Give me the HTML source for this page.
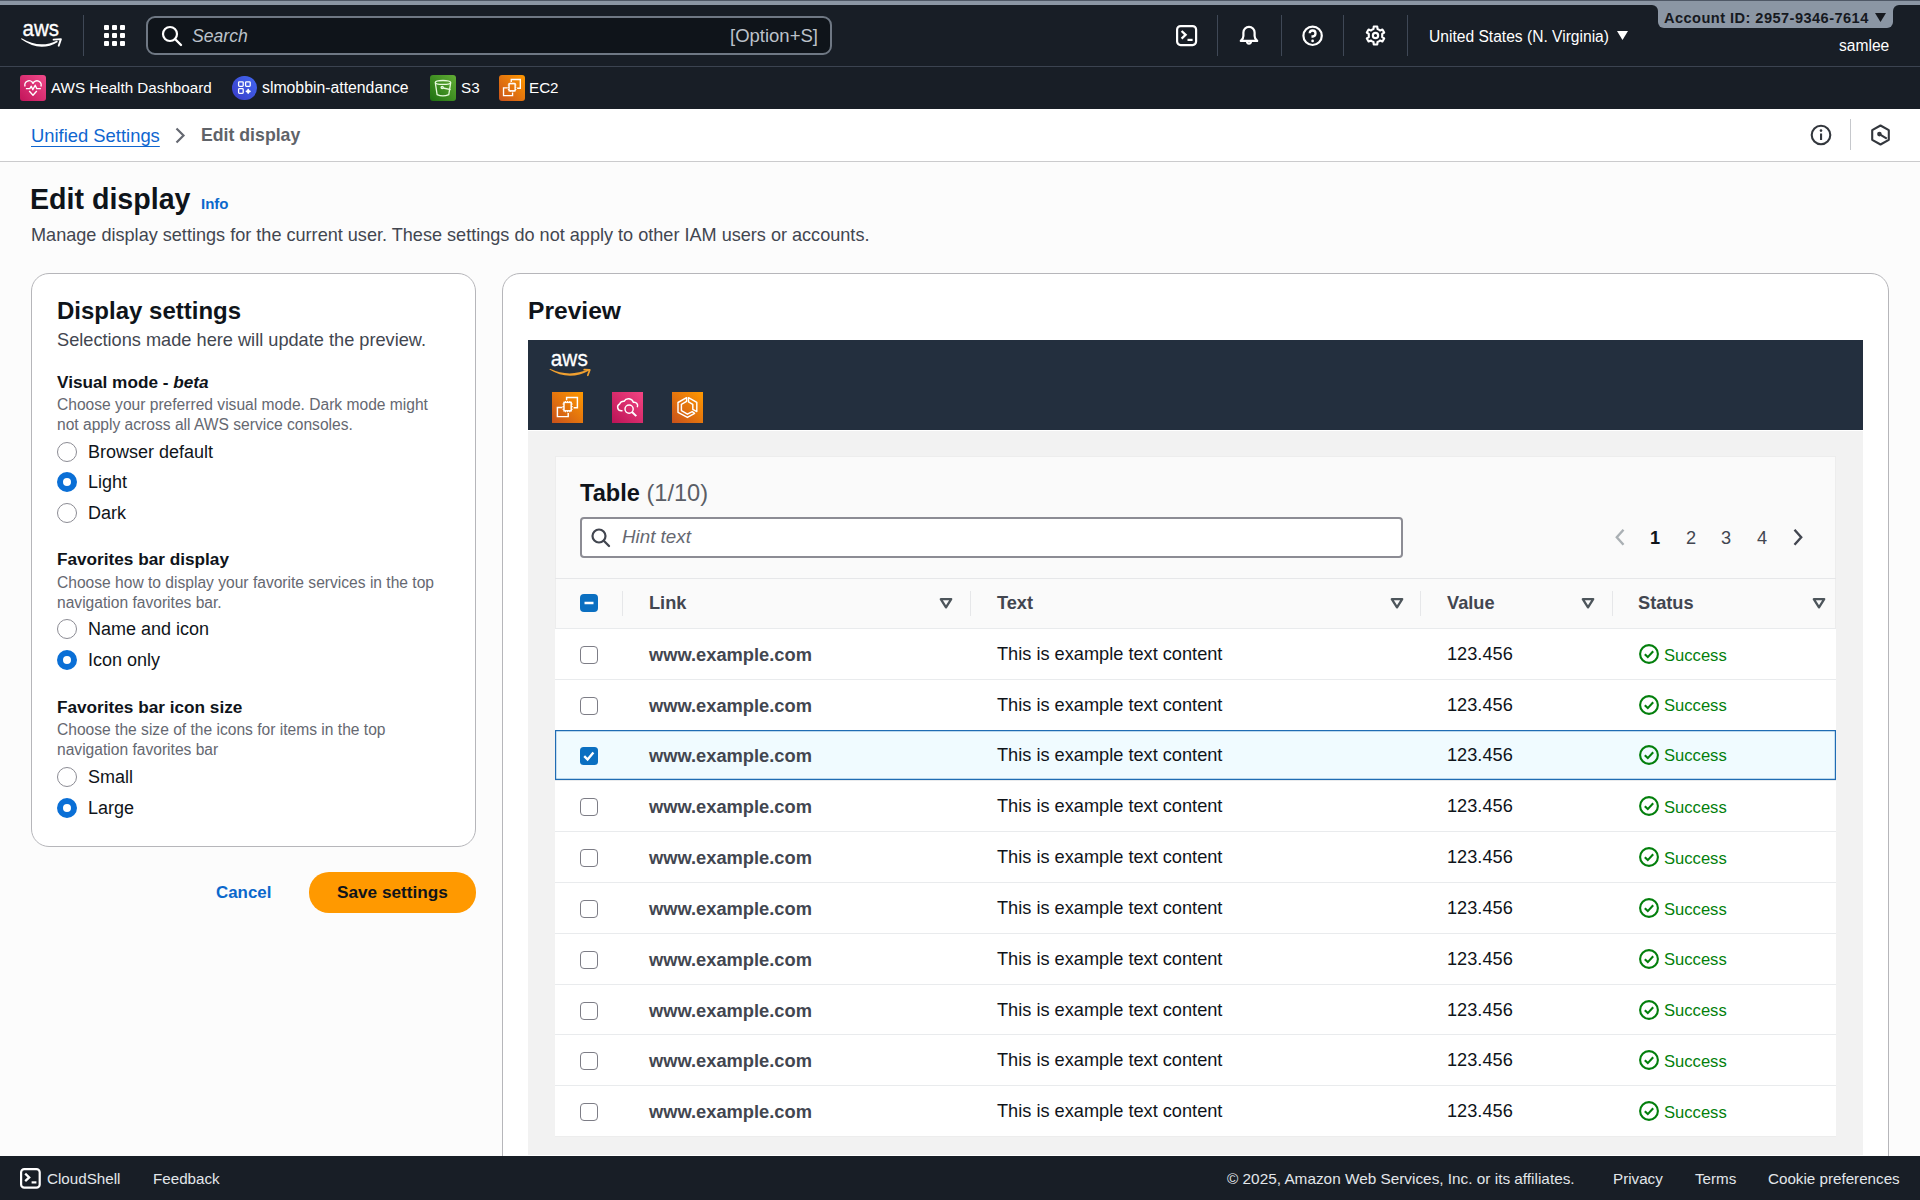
<!DOCTYPE html>
<html><head><meta charset="utf-8">
<style>
*{box-sizing:border-box;margin:0;padding:0}
html,body{width:1920px;height:1200px;overflow:hidden;background:#fcfcfc;font-family:"Liberation Sans",sans-serif;color:#0f141a}
.a{position:absolute;white-space:nowrap}
#top{position:absolute;left:0;top:0;width:1920px;height:109px;background:#181e26}
#strip{position:absolute;left:0;top:0;width:1920px;height:5px;background:#8b96a4;border-top:1px solid #4f5866}
#sep1{position:absolute;left:0;top:66px;width:1920px;height:1px;background:#3b4350}
.vd{position:absolute;width:1px;background:#4b5563}
#crumb{position:absolute;left:0;top:109px;width:1920px;height:53px;background:#fff;border-bottom:1px solid #cbcbcd}
.panel{position:absolute;background:#fff;border:1px solid #b6b6ba;border-radius:18px}
.h2{font-weight:700;font-size:24px;color:#0f141a}
.lbl{font-weight:700;font-size:17.2px;color:#0f141a}
.desc{font-size:15.6px;color:#656871}
.radio{position:absolute;width:20px;height:20px;border-radius:50%;border:1.4px solid #8c8c94;background:#fff}
.radio.on{border:6px solid #0a6fd6}
.rl{font-size:18px;color:#0f141a}
#foot{position:absolute;left:0;top:1155.5px;width:1920px;height:45px;background:#181e26}
.ft{color:#e2e6ea;font-size:15.2px}
.cb{position:absolute;width:18px;height:18px;border:1.5px solid #7d7d86;border-radius:4px;background:#fff}
.row{position:absolute;left:555px;width:1281px;height:51px;background:#fff;border-top:1px solid #e9ebed}
.lnk{position:absolute;left:94px;top:15px;font-weight:700;font-size:18.3px;color:#424650}
.txt{position:absolute;left:442px;top:15px;font-size:18.2px;color:#0f141a}
.val{position:absolute;left:892px;top:15px;font-size:18.2px;color:#0f141a}
.st{position:absolute;left:1083px;top:16.5px;font-size:16.6px;color:#037f0c}
</style></head><body>
<div id="top"></div>
<div id="strip"></div>
<div id="sep1"></div>

<!-- header -->
<svg class="a" style="left:0;top:0" width="80" height="60" viewBox="0 0 80 60">
 <text x="22.6" y="36" font-family="Liberation Sans" font-size="22.3" fill="#fff" stroke="#fff" stroke-width="0.35" textLength="36.5" lengthAdjust="spacingAndGlyphs">aws</text>
 <path d="M21 39.1 Q40 53 57.8 41.9 L57.1 40.4 Q40 49.2 21.6 38.3 Z" fill="#fff"/>
 <path d="M53.6 39.6 L60.9 39.1 L58.7 45.7" stroke="#fff" stroke-width="1.9" fill="none" stroke-linecap="round" stroke-linejoin="round"/>
</svg>
<div class="vd" style="left:83px;top:15px;height:41px;background:#3f4856"></div>
<svg class="a" style="left:104px;top:25px" width="22" height="22" viewBox="0 0 22 22" fill="#fff">
 <rect x="0" y="0" width="5" height="5" rx="1"/><rect x="8" y="0" width="5" height="5" rx="1"/><rect x="16" y="0" width="5" height="5" rx="1"/>
 <rect x="0" y="8" width="5" height="5" rx="1"/><rect x="8" y="8" width="5" height="5" rx="1"/><rect x="16" y="8" width="5" height="5" rx="1"/>
 <rect x="0" y="16" width="5" height="5" rx="1"/><rect x="8" y="16" width="5" height="5" rx="1"/><rect x="16" y="16" width="5" height="5" rx="1"/>
</svg>
<div class="a" style="left:146px;top:16px;width:686px;height:39px;border:2px solid #6f7884;border-radius:9px;background:#0f141a"></div>
<svg class="a" style="left:161px;top:25px" width="22" height="22" viewBox="0 0 22 22"><circle cx="9" cy="9" r="7" stroke="#fff" stroke-width="2.2" fill="none"/><path d="M14 14 L20 20" stroke="#fff" stroke-width="2.4" stroke-linecap="round"/></svg>
<div class="a" style="left:192px;top:26px;font-size:17.6px;font-style:italic;color:#bcc2ca">Search</div>
<div class="a" style="left:730px;top:25px;font-size:18.5px;color:#bcc2ca">[Option+S]</div>

<svg class="a" style="left:1175px;top:24px" width="23" height="23" viewBox="0 0 23 23"><rect x="2.1" y="2.1" width="19" height="19" rx="3.5" stroke="#fff" stroke-width="2.2" fill="none"/><path d="M6.6 7 L10.6 10.8 L6.6 14.6" stroke="#fff" stroke-width="2.3" fill="none"/><path d="M12.5 15.9 H17.6" stroke="#fff" stroke-width="2.2"/></svg>
<div class="vd" style="left:1217px;top:15px;height:41px;background:#3f4856"></div>
<svg class="a" style="left:1238px;top:24px" width="22" height="23" viewBox="0 0 22 23"><path d="M2.8 16.9 Q5.4 14.6 5.4 12 V8.4 A5.6 5.6 0 0 1 16.6 8.4 V12 Q16.6 14.6 19.2 16.9 Z" stroke="#fff" stroke-width="2.2" fill="none" stroke-linejoin="round"/><path d="M9 17.6 A2 2 0 0 0 13 17.6" stroke="#fff" stroke-width="2.2" fill="none"/></svg>
<div class="vd" style="left:1281px;top:15px;height:41px;background:#3f4856"></div>
<svg class="a" style="left:1301px;top:24px" width="23" height="23" viewBox="0 0 23 23"><circle cx="11.6" cy="11.8" r="9.2" stroke="#fff" stroke-width="2.2" fill="none"/><path d="M8.7 9.3 A2.9 2.9 0 1 1 11.6 12.3 V13.8" stroke="#fff" stroke-width="2.3" fill="none"/><circle cx="11.6" cy="16.9" r="1.35" fill="#fff"/></svg>
<div class="vd" style="left:1343px;top:15px;height:41px;background:#3f4856"></div>
<svg class="a" style="left:1365px;top:25px" width="21" height="21" viewBox="0 0 20.6 20.6"><path d="M7.00 4.58 L8.33 3.86 L8.58 1.47 L12.02 1.47 L12.27 3.86 L13.60 4.58 L14.89 5.38 L17.09 4.40 L18.81 7.37 L16.86 8.79 L16.90 10.30 L16.86 11.81 L18.81 13.23 L17.09 16.20 L14.89 15.22 L13.60 16.02 L12.27 16.74 L12.02 19.13 L8.58 19.13 L8.33 16.74 L7.00 16.02 L5.71 15.22 L3.51 16.20 L1.79 13.23 L3.74 11.81 L3.70 10.30 L3.74 8.79 L1.79 7.37 L3.51 4.40 L5.71 5.38 Z" stroke="#fff" stroke-width="2.1" fill="none" stroke-linejoin="round"/><circle cx="10.3" cy="10.3" r="2.6" stroke="#fff" stroke-width="2.1" fill="none"/></svg>
<div class="vd" style="left:1407px;top:15px;height:41px;background:#3f4856"></div>
<div class="a" style="left:1429px;top:28px;font-size:15.6px;color:#fff">United States (N. Virginia)</div>
<svg class="a" style="left:1617px;top:31px" width="11" height="9" viewBox="0 0 11 9"><path d="M0 0 H11 L5.5 9 Z" fill="#fff"/></svg>
<div class="a" style="left:1640px;top:4px;width:270px;height:12px;background:#8b96a4"></div><div class="a" style="left:1630px;top:5px;width:28px;height:12px;background:#181e26;border-top-right-radius:6px"></div><div class="a" style="left:1893px;top:5px;width:27px;height:12px;background:#181e26;border-top-left-radius:6px"></div><div class="a" style="left:1658px;top:4px;width:235px;height:24px;background:#8b96a4;border-radius:0 0 6px 6px"></div>
<div class="a" style="left:1664px;top:10px;font-size:14.6px;letter-spacing:0.45px;font-weight:700;color:#16191f">Account ID: 2957-9346-7614</div>
<svg class="a" style="left:1875px;top:13px" width="11" height="9" viewBox="0 0 11 9"><path d="M0 0 H11 L5.5 9 Z" fill="#16191f"/></svg>
<div class="a" style="left:1839px;top:37px;font-size:15.6px;color:#fff">samlee</div>

<!-- favorites -->
<div class="a" style="left:20px;top:75px;width:26px;height:26px;border-radius:3px;background:linear-gradient(45deg,#c2145a,#f04a8a)"></div>
<svg class="a" style="left:20px;top:75px" width="26" height="26" viewBox="0 0 26 26" stroke="#fff" stroke-width="1.35" fill="none" stroke-linejoin="round"><path d="M5.1 11.6 A4.1 4.1 0 0 1 13 8.4 A4.1 4.1 0 0 1 20.9 11.6"/><path d="M5.9 13.6 H9.8 L11.3 11.2 L12.8 14.8 L15.2 10.2 L16.8 13.6 H20.9"/><path d="M9.2 16 L13 20.3 L16.8 16"/></svg>
<div class="a" style="left:51px;top:79px;font-size:15.2px;color:#fff">AWS Health Dashboard</div>
<div class="a" style="left:232px;top:75.5px;width:24.5px;height:24.5px;border-radius:50%;background:linear-gradient(45deg,#3a3cc8,#4168f0)"></div><svg class="a" style="left:232px;top:75px" width="25" height="25" viewBox="0 0 25 25" stroke="#fff" stroke-width="1.3" fill="none"><rect x="6.6" y="6.8" width="4.6" height="4.6" rx="0.8"/><rect x="13.6" y="6.8" width="4.6" height="4.6" rx="0.8"/><rect x="6.6" y="13.7" width="4.6" height="4.6" rx="0.8"/><path d="M16.2 13.8 Q16.2 16.3 18.7 16.3 Q16.2 16.3 16.2 18.8 Q16.2 16.3 13.7 16.3 Q16.2 16.3 16.2 13.8 Z" stroke-width="1.2" fill="#fff"/></svg>
<div class="a" style="left:262px;top:79px;font-size:15.8px;color:#fff">slmobbin-attendance</div>
<div class="a" style="left:430px;top:75px;width:26px;height:26px;border-radius:3px;background:linear-gradient(45deg,#1d7010,#62ad35)"></div>
<svg class="a" style="left:430px;top:75px" width="26" height="26" viewBox="0 0 26 26" stroke="#e6fadc" stroke-width="1.3" fill="none"><ellipse cx="13" cy="7.4" rx="7.7" ry="1.9"/><path d="M5.3 7.6 L7.1 19.6 Q12.9 22.2 18.8 19.6 L20.7 7.6"/><circle cx="12.2" cy="12.4" r="1.1"/><path d="M13.2 13 L20.6 14.6"/></svg>
<div class="a" style="left:461px;top:79px;font-size:15.2px;color:#fff">S3</div>
<div class="a" style="left:499px;top:75px;width:26px;height:26px;border-radius:3px;background:linear-gradient(45deg,#c8511b,#ff9900)"></div>
<svg class="a" style="left:499px;top:75px" width="26" height="26" viewBox="0 0 31 31" stroke="#fff" stroke-width="1.6" fill="none">
 <rect x="12" y="10.4" width="7.2" height="8.4"/>
 <path d="M13.4 10.4 V8.9 M15.6 10.4 V8.9 M17.8 10.4 V8.9 M13.4 18.8 V20.3 M15.6 18.8 V20.3 M17.8 18.8 V20.3 M12 12 H10.5 M12 14.6 H10.5 M12 17.2 H10.5 M19.2 12 H20.7 M19.2 14.6 H20.7 M19.2 17.2 H20.7" stroke-width="1.2"/>
 <path d="M14.6 8.2 V5.4 H25.4 V15.8 H21.6"/>
 <path d="M10.4 15.4 H5.4 V24.6 H16.2 V21"/>
</svg>
<div class="a" style="left:529px;top:79px;font-size:15.2px;color:#fff">EC2</div>

<div id="crumb"></div>

<!-- breadcrumb -->
<div class="a" style="left:31px;top:125px;font-size:18.4px;color:#0f66d0;text-decoration:underline;text-underline-offset:4px;text-decoration-thickness:1px">Unified Settings</div>
<svg class="a" style="left:174px;top:127px" width="12" height="17" viewBox="0 0 12 17"><path d="M2.5 1.5 L9.5 8.5 L2.5 15.5" stroke="#656871" stroke-width="2.2" fill="none"/></svg>
<div class="a" style="left:201px;top:125px;font-size:17.7px;font-weight:700;color:#5f6369">Edit display</div>
<svg class="a" style="left:1810px;top:124px" width="22" height="22" viewBox="0 0 22 22"><circle cx="11" cy="11" r="9.3" stroke="#33373d" stroke-width="2.1" fill="none"/><rect x="10" y="9.5" width="2.1" height="6.5" fill="#33373d"/><circle cx="11" cy="6.6" r="1.3" fill="#33373d"/></svg>
<div class="vd" style="left:1850px;top:119px;height:31px;background:#c6c8cc"></div>
<svg class="a" style="left:1870px;top:124px" width="21" height="22" viewBox="0 0 21 22"><path d="M10.5 1.5 L18.8 6.2 V15.8 L10.5 20.5 L2.2 15.8 V6.2 Z" stroke="#33373d" stroke-width="2.1" fill="none" stroke-linejoin="round"/><circle cx="9.4" cy="10.1" r="2.3" fill="#33373d"/><path d="M9.4 10.1 L16.8 14.6" stroke="#33373d" stroke-width="2.1"/></svg>

<!-- title -->
<div class="a" style="left:30px;top:183px;font-size:28.6px;font-weight:700;color:#0f141a">Edit display</div>
<div class="a" style="left:201px;top:195px;font-size:15px;font-weight:700;color:#0b68cc">Info</div>
<div class="a" style="left:31px;top:225px;font-size:18.1px;color:#424650">Manage display settings for the current user. These settings do not apply to other IAM users or accounts.</div>

<!-- left panel -->
<div class="panel" style="left:31px;top:273px;width:445px;height:574px"></div>
<div class="a h2" style="left:57px;top:297px">Display settings</div>
<div class="a" style="left:57px;top:330px;font-size:18.2px;color:#424650">Selections made here will update the preview.</div>

<div class="a lbl" style="left:57px;top:372px">Visual mode - <i>beta</i></div>
<div class="a desc" style="left:57px;top:396px">Choose your preferred visual mode. Dark mode might</div>
<div class="a desc" style="left:57px;top:416px">not apply across all AWS service consoles.</div>
<div class="radio" style="left:57px;top:442px"></div><div class="a rl" style="left:88px;top:442px">Browser default</div>
<div class="radio on" style="left:57px;top:472px"></div><div class="a rl" style="left:88px;top:472px">Light</div>
<div class="radio" style="left:57px;top:503px"></div><div class="a rl" style="left:88px;top:503px">Dark</div>

<div class="a lbl" style="left:57px;top:549px">Favorites bar display</div>
<div class="a desc" style="left:57px;top:574px">Choose how to display your favorite services in the top</div>
<div class="a desc" style="left:57px;top:594px">navigation favorites bar.</div>
<div class="radio" style="left:57px;top:619px"></div><div class="a rl" style="left:88px;top:619px">Name and icon</div>
<div class="radio on" style="left:57px;top:650px"></div><div class="a rl" style="left:88px;top:650px">Icon only</div>

<div class="a lbl" style="left:57px;top:697px">Favorites bar icon size</div>
<div class="a desc" style="left:57px;top:721px">Choose the size of the icons for items in the top</div>
<div class="a desc" style="left:57px;top:741px">navigation favorites bar</div>
<div class="radio" style="left:57px;top:767px"></div><div class="a rl" style="left:88px;top:767px">Small</div>
<div class="radio on" style="left:57px;top:798px"></div><div class="a rl" style="left:88px;top:798px">Large</div>

<div class="a" style="left:216px;top:883px;font-size:16.9px;font-weight:700;color:#0b68cc">Cancel</div>
<div class="a" style="left:309px;top:872px;width:167px;height:41px;border-radius:20px;background:#ff9900"></div>
<div class="a" style="left:337px;top:882px;font-size:17.2px;font-weight:700;color:#0f141a">Save settings</div>


<!-- right panel -->
<div class="panel" style="left:502px;top:273px;width:1387px;height:960px"></div>
<div class="a h2" style="left:528px;top:297px;font-size:24.6px">Preview</div>
<div class="a" style="left:528px;top:340px;width:1335px;height:90px;background:#232f3e"></div>
<svg class="a" style="left:530px;top:340px" width="80" height="45" viewBox="0 0 80 45">
 <text x="20.8" y="26.1" font-family="Liberation Sans" font-size="21.8" fill="#fff" stroke="#fff" stroke-width="0.3" textLength="37" lengthAdjust="spacingAndGlyphs">aws</text>
 <path d="M19.4 29.6 Q39 41.5 59.3 30.6 L58.6 29.3 Q39 37.8 20 28.8 Z" fill="#f0a030"/>
 <path d="M54.2 29.7 L59.8 29.9 L57.8 35.3" stroke="#f0a030" stroke-width="1.7" fill="none" stroke-linecap="round" stroke-linejoin="round"/>
</svg>
<div class="a" style="left:552px;top:392px;width:31px;height:30.5px;background:linear-gradient(45deg,#c8511b,#ff9900)"></div>
<svg class="a" style="left:552px;top:392px" width="31" height="31" viewBox="0 0 31 31" stroke="#fff" stroke-width="1.45" fill="none">
 <rect x="12" y="10.4" width="7.2" height="8.4"/>
 <path d="M13.4 10.4 V8.9 M15.6 10.4 V8.9 M17.8 10.4 V8.9 M13.4 18.8 V20.3 M15.6 18.8 V20.3 M17.8 18.8 V20.3 M12 12 H10.5 M12 14.6 H10.5 M12 17.2 H10.5 M19.2 12 H20.7 M19.2 14.6 H20.7 M19.2 17.2 H20.7" stroke-width="1.1"/>
 <path d="M14.6 8.2 V5.4 H25.4 V15.8 H21.6"/>
 <path d="M10.4 15.4 H5.4 V24.6 H16.2 V21"/>
</svg>
<div class="a" style="left:612px;top:392px;width:31px;height:30.5px;background:linear-gradient(45deg,#bc1356,#f34482)"></div>
<svg class="a" style="left:612px;top:392px" width="31" height="31" viewBox="0 0 31 31" stroke="#fff" stroke-width="1.45" fill="none">
 <path d="M10.5 18.8 H9.2 A3.6 3.6 0 0 1 7.6 12 A4.6 4.6 0 0 1 12 9.3 A5.2 5.2 0 0 1 21.4 10.4 A3.4 3.4 0 0 1 25.3 15.2"/>
 <circle cx="17.1" cy="17.1" r="4.1"/>
 <path d="M20 20 L24.3 24.1" stroke-width="2"/>
</svg>
<div class="a" style="left:672px;top:392px;width:31px;height:30.5px;background:linear-gradient(45deg,#c8511b,#ff9900)"></div>
<svg class="a" style="left:672px;top:392px" width="31" height="31" viewBox="0 0 31 31" stroke="#fff" stroke-width="1.45" fill="none" stroke-linejoin="round">
 <path d="M14.6 5.6 L6 10.5 V20.3 L15.4 25.4 L22.6 21.3 L20.2 19.6 L15.4 22.2 L9.4 18.6 V12.3 L14.6 9.3 Z"/>
 <path d="M16.5 5.6 L24.8 10.4 V19.6 L20.8 17.4 V12.4 L16.5 9.9 Z"/>
</svg>
<div class="a" style="left:528px;top:431px;width:1335px;height:724px;background:#f2f2f2"></div>
<div class="a" style="left:555px;top:456px;width:1281px;height:681px;background:#fafafa;border:1px solid #ededed;border-radius:0"></div>
<div class="a" style="left:580px;top:480px;font-size:23.6px;font-weight:700;color:#0f141a">Table <span style="font-weight:400;color:#5a5e66">(1/10)</span></div>
<div class="a" style="left:580px;top:517px;width:823px;height:41px;border:2px solid #8c8c94;border-radius:4px;background:#fff"></div>
<svg class="a" style="left:590px;top:527px" width="22" height="22" viewBox="0 0 22 22"><circle cx="9" cy="9" r="6.5" stroke="#424650" stroke-width="2.2" fill="none"/><path d="M13.8 13.8 L19 19" stroke="#424650" stroke-width="2.3" stroke-linecap="round"/></svg>
<div class="a" style="left:622px;top:526px;font-size:18.8px;font-style:italic;color:#656871">Hint text</div>
<svg class="a" style="left:1613px;top:527px" width="14" height="20" viewBox="0 0 14 20"><path d="M10.5 2.8 L3.8 10.3 L10.5 17.8" stroke="#aab0b4" stroke-width="2.4" fill="none"/></svg>
<div class="a" style="left:1650px;top:528px;font-size:18.2px;font-weight:700;color:#0f141a">1</div>
<div class="a" style="left:1686px;top:528px;font-size:18.2px;color:#424650">2</div>
<div class="a" style="left:1721px;top:528px;font-size:18.2px;color:#424650">3</div>
<div class="a" style="left:1757px;top:528px;font-size:18.2px;color:#424650">4</div>
<svg class="a" style="left:1791px;top:527px" width="14" height="20" viewBox="0 0 14 20"><path d="M3.5 2.8 L10.2 10.3 L3.5 17.8" stroke="#424650" stroke-width="2.4" fill="none"/></svg>
<div class="a" style="left:555px;top:578px;width:1281px;height:1px;background:#e6e7e9"></div>
<svg class="a" style="left:580px;top:594px" width="18" height="18" viewBox="0 0 18 18"><rect width="18" height="18" rx="4" fill="#0a6fc1"/><path d="M4.5 9 H13.5" stroke="#fff" stroke-width="2.5"/></svg>
<div class="vd" style="left:622px;top:591px;height:25px;background:#e6e7e9"></div>
<div class="vd" style="left:970px;top:591px;height:25px;background:#e6e7e9"></div>
<div class="vd" style="left:1420px;top:591px;height:25px;background:#e6e7e9"></div>
<div class="vd" style="left:1612px;top:591px;height:25px;background:#e6e7e9"></div>
<div class="a" style="left:649px;top:593px;font-size:18.2px;font-weight:700;color:#424650">Link</div>
<div class="a" style="left:997px;top:593px;font-size:18.2px;font-weight:700;color:#424650">Text</div>
<div class="a" style="left:1447px;top:593px;font-size:18.2px;font-weight:700;color:#424650">Value</div>
<div class="a" style="left:1638px;top:593px;font-size:18.2px;font-weight:700;color:#424650">Status</div>
<svg class="a" style="left:939px;top:597px" width="14" height="13" viewBox="0 0 14 13"><path d="M1.8 2.1 H12.2 L7 10.4 Z" stroke="#4d555b" stroke-width="2.3" fill="none" stroke-linejoin="round"/></svg>
<svg class="a" style="left:1390px;top:597px" width="14" height="13" viewBox="0 0 14 13"><path d="M1.8 2.1 H12.2 L7 10.4 Z" stroke="#4d555b" stroke-width="2.3" fill="none" stroke-linejoin="round"/></svg>
<svg class="a" style="left:1581px;top:597px" width="14" height="13" viewBox="0 0 14 13"><path d="M1.8 2.1 H12.2 L7 10.4 Z" stroke="#4d555b" stroke-width="2.3" fill="none" stroke-linejoin="round"/></svg>
<svg class="a" style="left:1812px;top:597px" width="14" height="13" viewBox="0 0 14 13"><path d="M1.8 2.1 H12.2 L7 10.4 Z" stroke="#4d555b" stroke-width="2.3" fill="none" stroke-linejoin="round"/></svg>
<div class="row" style="top:628.0px;height:50.8px"><div class="cb" style="left:25px;top:17px"></div><div class="lnk">www.example.com</div><div class="txt">This is example text content</div><div class="val">123.456</div><svg class="a" style="left:1083.5px;top:15px" width="20" height="20" viewBox="0 0 20 20"><circle cx="10" cy="10" r="8.9" stroke="#037f0c" stroke-width="2.1" fill="none"/><path d="M5.8 10.2 L8.8 13.1 L14.2 7.2" stroke="#037f0c" stroke-width="2.1" fill="none"/></svg><div class="st" style="left:1109px">Success</div></div>
<div class="row" style="top:678.8px;height:50.8px"><div class="cb" style="left:25px;top:17px"></div><div class="lnk">www.example.com</div><div class="txt">This is example text content</div><div class="val">123.456</div><svg class="a" style="left:1083.5px;top:15px" width="20" height="20" viewBox="0 0 20 20"><circle cx="10" cy="10" r="8.9" stroke="#037f0c" stroke-width="2.1" fill="none"/><path d="M5.8 10.2 L8.8 13.1 L14.2 7.2" stroke="#037f0c" stroke-width="2.1" fill="none"/></svg><div class="st" style="left:1109px">Success</div></div>
<div class="row" style="top:729.6px;height:50.8px;background:#f0fbff;box-shadow:inset 0 0 0 1.2px #1f6cb3;border-top:none"><svg class="a" style="left:25px;top:17px" width="18" height="18" viewBox="0 0 18 18"><rect width="18" height="18" rx="3.5" fill="#0a6fc1"/><path d="M4.2 9.2 L7.6 12.5 L13.4 5.6" stroke="#fff" stroke-width="2.4" fill="none"/></svg><div class="lnk">www.example.com</div><div class="txt">This is example text content</div><div class="val">123.456</div><svg class="a" style="left:1083.5px;top:15px" width="20" height="20" viewBox="0 0 20 20"><circle cx="10" cy="10" r="8.9" stroke="#037f0c" stroke-width="2.1" fill="none"/><path d="M5.8 10.2 L8.8 13.1 L14.2 7.2" stroke="#037f0c" stroke-width="2.1" fill="none"/></svg><div class="st" style="left:1109px">Success</div></div>
<div class="row" style="top:780.4px;height:50.8px"><div class="cb" style="left:25px;top:17px"></div><div class="lnk">www.example.com</div><div class="txt">This is example text content</div><div class="val">123.456</div><svg class="a" style="left:1083.5px;top:15px" width="20" height="20" viewBox="0 0 20 20"><circle cx="10" cy="10" r="8.9" stroke="#037f0c" stroke-width="2.1" fill="none"/><path d="M5.8 10.2 L8.8 13.1 L14.2 7.2" stroke="#037f0c" stroke-width="2.1" fill="none"/></svg><div class="st" style="left:1109px">Success</div></div>
<div class="row" style="top:831.2px;height:50.8px"><div class="cb" style="left:25px;top:17px"></div><div class="lnk">www.example.com</div><div class="txt">This is example text content</div><div class="val">123.456</div><svg class="a" style="left:1083.5px;top:15px" width="20" height="20" viewBox="0 0 20 20"><circle cx="10" cy="10" r="8.9" stroke="#037f0c" stroke-width="2.1" fill="none"/><path d="M5.8 10.2 L8.8 13.1 L14.2 7.2" stroke="#037f0c" stroke-width="2.1" fill="none"/></svg><div class="st" style="left:1109px">Success</div></div>
<div class="row" style="top:882.0px;height:50.8px"><div class="cb" style="left:25px;top:17px"></div><div class="lnk">www.example.com</div><div class="txt">This is example text content</div><div class="val">123.456</div><svg class="a" style="left:1083.5px;top:15px" width="20" height="20" viewBox="0 0 20 20"><circle cx="10" cy="10" r="8.9" stroke="#037f0c" stroke-width="2.1" fill="none"/><path d="M5.8 10.2 L8.8 13.1 L14.2 7.2" stroke="#037f0c" stroke-width="2.1" fill="none"/></svg><div class="st" style="left:1109px">Success</div></div>
<div class="row" style="top:932.8px;height:50.8px"><div class="cb" style="left:25px;top:17px"></div><div class="lnk">www.example.com</div><div class="txt">This is example text content</div><div class="val">123.456</div><svg class="a" style="left:1083.5px;top:15px" width="20" height="20" viewBox="0 0 20 20"><circle cx="10" cy="10" r="8.9" stroke="#037f0c" stroke-width="2.1" fill="none"/><path d="M5.8 10.2 L8.8 13.1 L14.2 7.2" stroke="#037f0c" stroke-width="2.1" fill="none"/></svg><div class="st" style="left:1109px">Success</div></div>
<div class="row" style="top:983.6px;height:50.8px"><div class="cb" style="left:25px;top:17px"></div><div class="lnk">www.example.com</div><div class="txt">This is example text content</div><div class="val">123.456</div><svg class="a" style="left:1083.5px;top:15px" width="20" height="20" viewBox="0 0 20 20"><circle cx="10" cy="10" r="8.9" stroke="#037f0c" stroke-width="2.1" fill="none"/><path d="M5.8 10.2 L8.8 13.1 L14.2 7.2" stroke="#037f0c" stroke-width="2.1" fill="none"/></svg><div class="st" style="left:1109px">Success</div></div>
<div class="row" style="top:1034.4px;height:50.8px"><div class="cb" style="left:25px;top:17px"></div><div class="lnk">www.example.com</div><div class="txt">This is example text content</div><div class="val">123.456</div><svg class="a" style="left:1083.5px;top:15px" width="20" height="20" viewBox="0 0 20 20"><circle cx="10" cy="10" r="8.9" stroke="#037f0c" stroke-width="2.1" fill="none"/><path d="M5.8 10.2 L8.8 13.1 L14.2 7.2" stroke="#037f0c" stroke-width="2.1" fill="none"/></svg><div class="st" style="left:1109px">Success</div></div>
<div class="row" style="top:1085.2px;height:50.8px"><div class="cb" style="left:25px;top:17px"></div><div class="lnk">www.example.com</div><div class="txt">This is example text content</div><div class="val">123.456</div><svg class="a" style="left:1083.5px;top:15px" width="20" height="20" viewBox="0 0 20 20"><circle cx="10" cy="10" r="8.9" stroke="#037f0c" stroke-width="2.1" fill="none"/><path d="M5.8 10.2 L8.8 13.1 L14.2 7.2" stroke="#037f0c" stroke-width="2.1" fill="none"/></svg><div class="st" style="left:1109px">Success</div></div>

<div id="foot"></div>
<svg class="a" style="left:20px;top:1168px" width="21" height="21" viewBox="0 0 21 21"><rect x="1.1" y="1.1" width="18.6" height="18.6" rx="3.2" stroke="#fff" stroke-width="2.2" fill="none"/><path d="M5.2 5.6 L9.2 9.4 L5.2 13.2" stroke="#fff" stroke-width="2.3" fill="none"/><path d="M11.6 14.4 H16.4" stroke="#fff" stroke-width="2.2"/></svg>
<div class="a ft" style="left:47px;top:1170px">CloudShell</div>
<div class="a ft" style="left:153px;top:1170px">Feedback</div>
<div class="a ft" style="left:1227px;top:1170px;font-size:15.35px">© 2025, Amazon Web Services, Inc. or its affiliates.</div>
<div class="a ft" style="left:1613px;top:1170px">Privacy</div>
<div class="a ft" style="left:1695px;top:1170px">Terms</div>
<div class="a ft" style="left:1768px;top:1170px">Cookie preferences</div>

</body></html>
